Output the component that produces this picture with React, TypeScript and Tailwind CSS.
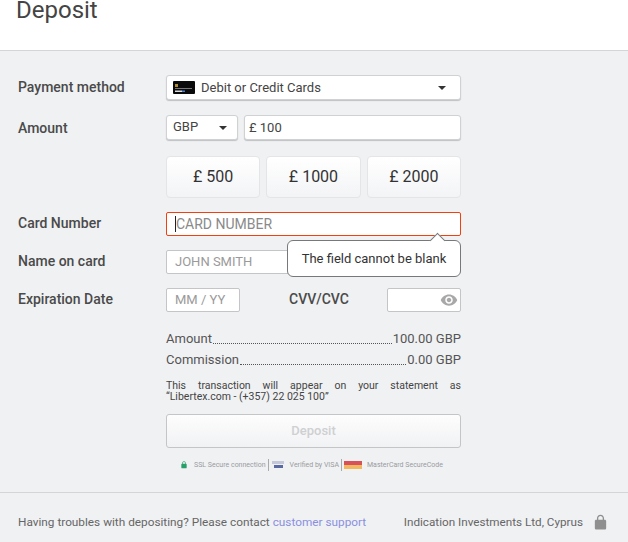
const quickAmounts = ['£ 500', '£ 1000', '£ 2000']

function Caret() {
  return <span className="h-0 w-0 border-x-[4px] border-t-[4px] border-x-transparent border-t-[#333333]" />
}

function LockIcon({ size, color }: { size: number; color: string }) {
  return (
    <svg width={size} height={size} viewBox="0 0 24 24" fill={color}>
      <path d="M18 8h-1V6c0-2.76-2.24-5-5-5S7 3.24 7 6v2H6c-1.1 0-2 .9-2 2v10c0 1.1.9 2 2 2h12c1.1 0 2-.9 2-2V10c0-1.1-.9-2-2-2zm-2.9 0H8.9V6c0-1.71 1.39-3.1 3.1-3.1 1.71 0 3.1 1.39 3.1 3.1v2z" />
    </svg>
  )
}

function DottedRow({ label, value }: { label: string; value: string }) {
  return (
    <div className="flex h-[21px] items-center text-[13px] text-[#555555]">
      <span>{label}</span>
      <span className="mx-px mt-[9px] flex-1 border-b border-dotted border-[#555555]" />
      <span>{value}</span>
    </div>
  )
}

function FormRow({ label, className, labelClass, children }: { label: string; className?: string; labelClass?: string; children: React.ReactNode }) {
  return (
    <div className={`flex ${className ?? ''}`}>
      <div className={`w-[148px] shrink-0 text-sm font-medium leading-[24px] text-[#4a4a4a] ${labelClass ?? ''}`}>{label}</div>
      <div className="w-[295px] shrink-0">{children}</div>
    </div>
  )
}

export default function App() {
  return (
    <div className="h-[542px] w-[628px] overflow-hidden bg-[#f0f1f3] font-['Roboto',sans-serif]">
      {/* Header */}
      <div className="h-[51px] overflow-hidden border-b border-[#d4d5d7] bg-white pl-[16px]">
        <h1 className="-mt-[6px] text-[24px] leading-[32px] text-[#444444]">Deposit</h1>
      </div>

      {/* Form */}
      <div className="pl-[18px] pt-[24px]">
        <FormRow label="Payment method">
          <div className="flex h-[25px] items-center rounded-[3px] border border-[#d0d1d3] bg-white pl-[6px] pr-[14px] shadow-[0_1px_1px_rgba(0,0,0,0.2)]">
            <svg width="22" height="13" viewBox="0 0 22 13" className="mr-[6px]">
              <rect width="22" height="13" rx="1" fill="#0a0a0a" />
              <rect x="2" y="3" width="3" height="3" fill="#b08a2e" />
              <rect x="2" y="7" width="17" height="1" fill="#77777a" />
              <rect x="2" y="9.5" width="7" height="1.5" fill="#dddddd" />
              <rect x="9" y="9.5" width="3" height="1.5" fill="#4a7fd0" />
            </svg>
            <span className="flex-1 text-[13px] text-[#444444]">Debit or Credit Cards</span>
            <Caret />
          </div>
        </FormRow>

        <FormRow label="Amount" className="mt-[15px]" labelClass="translate-y-px">
          <div className="flex gap-[6px]">
            <div className="flex h-[25px] w-[72px] items-center justify-between rounded-[3px] border border-[#d0d1d3] bg-white pl-[6px] pr-[10px] text-[13px] text-[#444444] shadow-[0_1px_1px_rgba(0,0,0,0.2)]">
              <span className="-translate-y-px">GBP</span>
              <Caret />
            </div>
            <div className="flex h-[25px] flex-1 items-center rounded-[3px] border border-[#d0d1d3] bg-white pl-[4px] text-[13px] text-[#444444] shadow-[0_1px_1px_rgba(0,0,0,0.2)]">
              £ 100
            </div>
          </div>
        </FormRow>

        <div className="mt-[16px] flex pl-[148px]">
          <div className="flex w-[295px] gap-[6px]">
            {quickAmounts.map((amount) => (
              <div
                key={amount}
                className="flex h-[42px] flex-1 items-center justify-center rounded-[4px] border border-[#e4e5e7] bg-gradient-to-b from-white to-[#f3f4f6] text-base text-[#333333]"
              >
                {amount}
              </div>
            ))}
          </div>
        </div>

        <FormRow label="Card Number" className="mt-[14px]" labelClass="-translate-y-px">
          <div className="relative">
            <div className="flex h-[24px] items-center rounded-[2px] border border-[#f0400f] bg-white pl-[8px] text-sm text-[#8a8a8a]">
              <span className="h-[16px] w-px bg-[#222222]" />
              CARD NUMBER
            </div>
            {/* Validation tooltip */}
            <div className="absolute left-[121px] top-[28px] z-10 flex h-[37px] w-[174px] items-center justify-center rounded-[6px] border border-[#77787a] bg-white text-[13px] text-[#333333]">
              The field cannot be blank
              <span className="absolute -top-[6px] right-[17px] h-[11px] w-[11px] rotate-45 border-l border-t border-[#77787a] bg-white" />
            </div>
          </div>
        </FormRow>

        <FormRow label="Name on card" className="mt-[14px]" labelClass="-translate-y-px">
          <div className="flex h-[24px] items-center rounded-[2px] border border-[#c4c5c7] bg-white pl-[8px] text-[13px] text-[#9a9a9a]">
            JOHN SMITH
          </div>
        </FormRow>

        <FormRow label="Expiration Date" className="mt-[14px]" labelClass="-translate-y-px">
          <div className="flex items-center">
            <div className="flex h-[24px] w-[74px] items-center rounded-[2px] border border-[#c4c5c7] bg-white pl-[8px] text-[13px] text-[#9a9a9a]">
              MM / YY
            </div>
            <span className="ml-[49px] flex-1 -translate-y-px text-sm font-medium text-[#4a4a4a]">CVV/CVC</span>
            <div className="flex h-[24px] w-[74px] items-center justify-end rounded-[2px] border border-[#c4c5c7] bg-white pr-[2px]">
              <svg width="18" height="18" viewBox="0 0 24 24" fill="#a8a8a8">
                <path d="M12 4.5C7 4.5 2.73 7.61 1 12c1.73 4.39 6 7.5 11 7.5s9.27-3.11 11-7.5c-1.73-4.39-6-7.5-11-7.5zM12 17c-2.76 0-5-2.24-5-5s2.24-5 5-5 5 2.24 5 5-2.24 5-5 5zm0-8c-1.66 0-3 1.34-3 3s1.34 3 3 3 3-1.34 3-3-1.34-3-3-3z" />
              </svg>
            </div>
          </div>
        </FormRow>

        {/* Summary */}
        <div className="ml-[148px] mt-[16px] w-[295px]">
          <DottedRow label="Amount" value="100.00 GBP" />
          <DottedRow label="Commission" value="0.00 GBP" />
          <p className="mt-[10px] text-justify text-[10.5px] leading-[11px] text-[#444444]">
            This transaction will appear on your statement as “Libertex.com - (+357) 22 025 100”
          </p>
          <div className="mt-[12px] flex h-[34px] items-center justify-center rounded-[3px] border border-[#c4c5c7] bg-gradient-to-b from-[#fdfdfd] to-[#f1f2f4] text-[13px] font-medium text-[#cfd0d2]">
            Deposit
          </div>

          <div className="mt-[10px] flex h-[14px] items-center pl-[14px] text-[7px] text-[#9a9ba0]">
            <span className="mr-[6px] flex">
              <LockIcon size={8} color="#27a06a" />
            </span>
            <span>SSL Secure connection</span>
            <span className="mx-[2px] h-[12px] w-px bg-[#aaaaaa]" />
            <svg width="14" height="8" viewBox="0 0 14 8" className="mr-[5px]">
              <rect x="1" y="0" width="12" height="3" fill="#c4c8d8" />
              <rect x="3" y="4" width="9" height="3" fill="#5a6aa0" />
            </svg>
            <span>Verified by VISA</span>
            <span className="mx-[2px] h-[12px] w-px bg-[#aaaaaa]" />
            <svg width="18" height="8" viewBox="0 0 18 8" className="mr-[5px]">
              <rect x="0" y="0" width="18" height="4" fill="#d8505a" />
              <rect x="0" y="4" width="18" height="4" fill="#f2b860" />
            </svg>
            <span>MasterCard SecureCode</span>
          </div>
        </div>
      </div>

      {/* Footer */}
      <div className="mt-[20px] flex h-[50px] items-center justify-between border-t border-[#d4d5d7] pl-[18px] pr-[19px] pt-[10px] text-[11.8px] text-[#666666]">
        <span>
          Having troubles with depositing? Please contact <span className="text-[#8a8fe0]">customer support</span>
        </span>
        <span className="flex items-center gap-[9px] text-[11.7px]">
          Indication Investments Ltd, Cyprus
          <LockIcon size={17} color="#8f8f8f" />
        </span>
      </div>
    </div>
  )
}
